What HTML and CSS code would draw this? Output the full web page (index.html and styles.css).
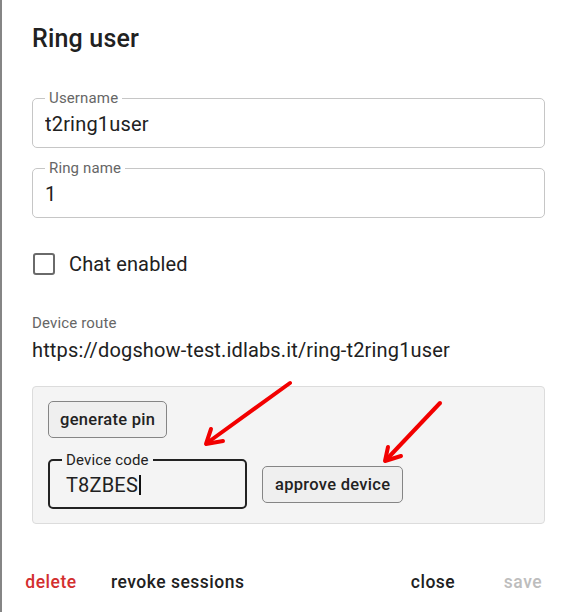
FILE: index.html
```html
<!DOCTYPE html>
<html lang="en">
<head>
<meta charset="utf-8">
<title>Ring user</title>
<link rel="stylesheet" href="styles.css">
</head>
<body>
<div class="dialog">
  <div class="content">
    <h2 class="title">Ring user</h2>

    <fieldset class="field">
      <legend>Username</legend>
      <input class="value" type="text" value="t2ring1user">
    </fieldset>

    <fieldset class="field field-ring">
      <legend>Ring name</legend>
      <input class="value" type="text" value="1">
    </fieldset>

    <label class="check">
      <span class="box"></span>
      <span class="check-text">Chat enabled</span>
    </label>

    <div class="route">
      <div class="route-label">Device route</div>
      <div class="route-url">https://dogshow-test.idlabs.it/ring-t2ring1user</div>
    </div>

    <div class="panel">
      <button class="btn" type="button">generate pin</button>
      <div class="code-row">
        <fieldset class="field code">
          <legend>Device code</legend>
          <div class="value code-value">T8ZBES<span class="caret"></span></div>
        </fieldset>
        <button class="btn approve" type="button">approve device</button>
      </div>
    </div>
  </div>

  <div class="actions">
    <button class="action danger" type="button">delete</button>
    <button class="action" type="button">revoke sessions</button>
    <button class="action push" type="button">close</button>
    <button class="action disabled" type="button">save</button>
  </div>
</div>

<svg class="arrows" width="575" height="612" viewBox="0 0 575 612" aria-hidden="true">
  <g fill="none" stroke="#f20000" stroke-width="4" stroke-linecap="round" stroke-linejoin="round">
    <path d="M290 383 L207 443"/>
    <path d="M211 429 L206 444 L223 441"/>
    <path d="M440 403 L386 460"/>
    <path d="M388 447 L385 461 L401 456"/>
  </g>
</svg>
</body>
</html>
```

FILE: styles.css
```css
* { box-sizing: border-box; }

html, body {
  margin: 0;
  padding: 0;
  background: #ffffff;
}

body {
  font-family: Roboto, "Liberation Sans", Arial, sans-serif;
  color: #212121;
  letter-spacing: 0.00938em;
  position: relative;
}

.dialog {
  border-left: 2px solid #858585;
  min-height: 612px;
}

.content {
  padding: 23px 30px 0 30px;
}

.title {
  margin: 0;
  font-size: 25px;
  line-height: 32px;
  font-weight: 500;
  letter-spacing: 0.0075em;
  color: #212121;
}

.field {
  margin: 34px 0 0 0;
  padding: 5px 12px 11px 12px;
  border: 1px solid #c6c6c6;
  border-radius: 5px;
  min-width: 0;
}

.field legend {
  padding: 0 4px;
  font-size: 15px;
  line-height: 18px;
  color: #666666;
}

.field-ring {
  margin-top: 11px;
}

.value {
  display: block;
  width: 100%;
  border: none;
  outline: none;
  background: transparent;
  padding: 0;
  margin: 0;
  font-family: inherit;
  font-size: 20px;
  letter-spacing: 0.00938em;
  line-height: 24px;
  height: 24px;
  color: #212121;
}

.check {
  display: flex;
  align-items: center;
  gap: 14px;
  margin-top: 34px;
  padding-left: 1px;
}

.box {
  width: 22px;
  height: 22px;
  border: 2.5px solid #6a6a6a;
  border-radius: 3px;
}

.check-text {
  font-size: 20px;
  line-height: 24px;
}

.route {
  margin-top: 38px;
}

.route-label {
  font-size: 15px;
  line-height: 18px;
  color: #666666;
}

.route-url {
  margin-top: 6px;
  font-size: 20px;
  line-height: 24px;
}

.panel {
  margin-top: 24px;
  background: #f4f4f4;
  border: 1px solid #dcdcdc;
  border-radius: 4px;
  padding: 14px 15px 14px 15px;
}

.btn {
  display: block;
  font-family: inherit;
  font-size: 16.5px;
  font-weight: 500;
  letter-spacing: 0.3px;
  line-height: 19px;
  color: #222222;
  background: #efefef;
  border: 1px solid #858585;
  border-radius: 5px;
  padding: 8px 11px;
}

.code-row {
  display: flex;
  align-items: flex-end;
  gap: 15px;
  margin-top: 13px;
}

.code {
  margin: 0;
  width: 199px;
  border: 2px solid #222222;
  padding: 4px 12px 10px 12px;
}

.code legend {
  color: #222222;
}

.code-value {
  padding-left: 4px;
}

.caret {
  display: inline-block;
  width: 2px;
  height: 20px;
  background: #111111;
  vertical-align: -3px;
  margin-left: 1px;
}

.approve {
  margin-bottom: 6px;
  padding: 8px 12px;
}

.actions {
  display: flex;
  gap: 10px;
  margin-top: 36px;
  padding: 0 12px 0 9px;
}

.action {
  min-width: 80px;
  padding: 7px 10px;
  font-family: inherit;
  font-size: 17.5px;
  font-weight: 500;
  letter-spacing: 0.5px;
  line-height: 30px;
  color: #212121;
  background: transparent;
  border: none;
  border-radius: 5px;
}

.danger { color: #d32f2f; }
.disabled { color: #bdbdbd; }
.push { margin-left: auto; }

.arrows {
  position: absolute;
  top: 0;
  left: 0;
  pointer-events: none;
}
```
